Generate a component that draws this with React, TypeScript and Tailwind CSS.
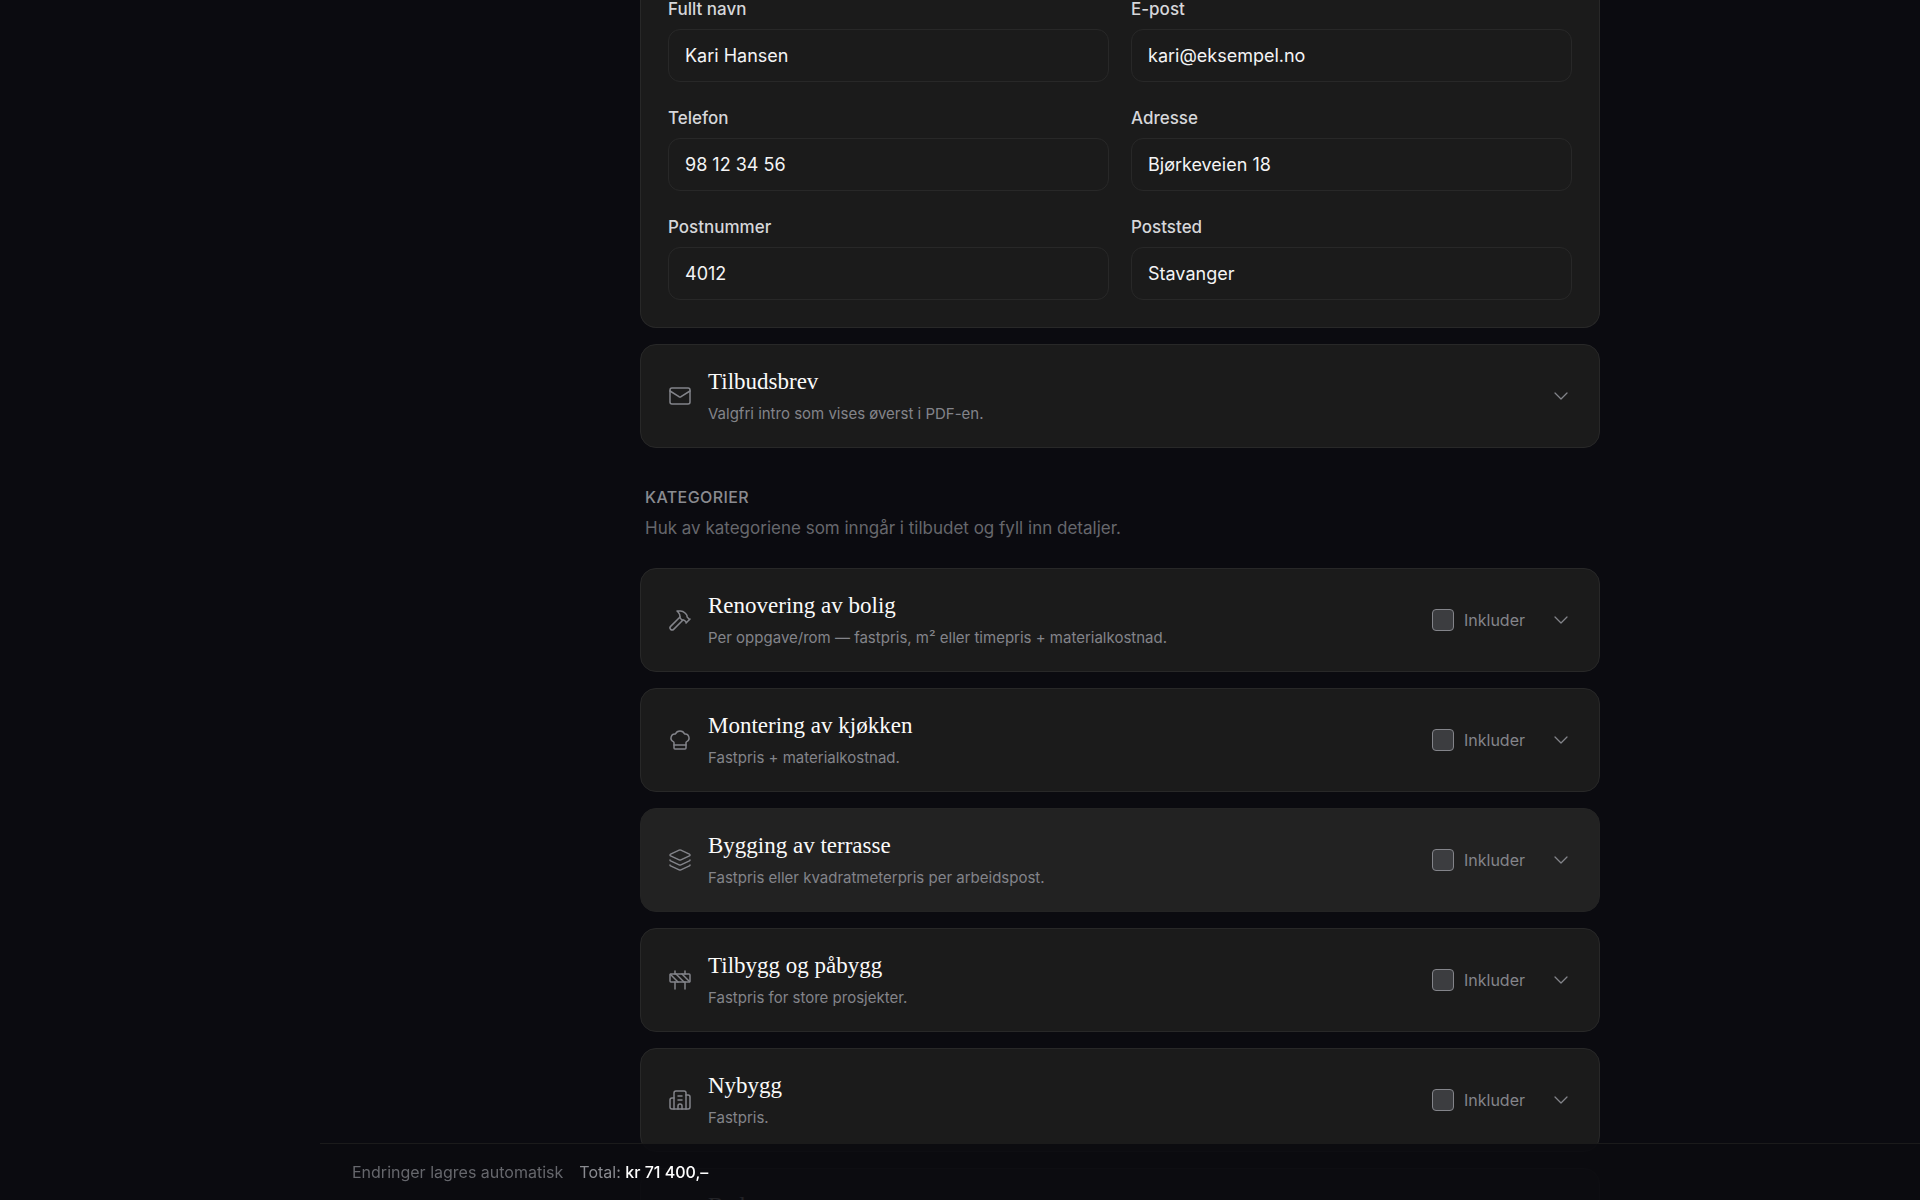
import { Mail, Hammer, ChefHat, Layers, Construction, Building2, ChevronDown, Wrench, type LucideIcon } from "lucide-react";
import { useState } from "react";

const fields = [
  { id: "name", label: "Fullt navn", value: "Kari Hansen", type: "text" },
  { id: "email", label: "E-post", value: "kari@eksempel.no", type: "email" },
  { id: "phone", label: "Telefon", value: "98 12 34 56", type: "tel" },
  { id: "address", label: "Adresse", value: "Bjørkeveien 18", type: "text" },
  { id: "zip", label: "Postnummer", value: "4012", type: "text" },
  { id: "city", label: "Poststed", value: "Stavanger", type: "text" },
];

type Category = { id: string; title: string; text: string; icon: LucideIcon; active?: boolean };

const categories: Category[] = [
  { id: "renovering", title: "Renovering av bolig", text: "Per oppgave/rom — fastpris, m² eller timepris + materialkostnad.", icon: Hammer },
  { id: "kjokken", title: "Montering av kjøkken", text: "Fastpris + materialkostnad.", icon: ChefHat },
  { id: "terrasse", title: "Bygging av terrasse", text: "Fastpris eller kvadratmeterpris per arbeidspost.", icon: Layers, active: true },
  { id: "tilbygg", title: "Tilbygg og påbygg", text: "Fastpris for store prosjekter.", icon: Construction },
  { id: "nybygg", title: "Nybygg", text: "Fastpris.", icon: Building2 },
];

function Field({ id, label, value, type }: (typeof fields)[number]) {
  const [text, setText] = useState(value);
  return (
    <div className="flex flex-col gap-2">
      <label htmlFor={id} className="text-[17px] leading-6 font-medium text-[#d6d7da]">{label}</label>
      <input
        id={id}
        type={type}
        value={text}
        onChange={(e) => setText(e.target.value)}
        className="h-[53px] w-full rounded-xl border border-[#282828] bg-transparent px-4 text-lg text-[#f4f4f5] outline-none"
      />
    </div>
  );
}

function Card({ id, title, text, icon: Icon, active, selectable }: Category & { selectable?: boolean }) {
  return (
    <section
      className={
        active
          ? "flex h-26 items-center rounded-2xl border border-[#242424] bg-[#222222] pr-[26px] pl-[27px]"
          : "flex h-26 items-center rounded-2xl border border-[#282828] bg-[#1b1b1b] pr-[26px] pl-[27px]"
      }
    >
      <Icon size={24} strokeWidth={1.5} className="shrink-0 text-[#83848a]" aria-hidden />
      <div className="ml-4 flex min-w-0 flex-1 flex-col gap-1.5 pt-0.5">
        <h3 className="font-['Liberation_Serif',serif] text-[23px] leading-7 text-[#fafafa]">{title}</h3>
        <p className="text-[15px] leading-6 text-[#83848a]">{text}</p>
      </div>
      {selectable && (
        <label htmlFor={id} className="mr-6 flex items-center gap-2.5 text-base text-[#83848a]">
          <input id={id} type="checkbox" className="size-[22px] appearance-none rounded border border-[#83848a] bg-[#3c3d40]" />
          Inkluder
        </label>
      )}
      <button type="button" aria-label={"Vis " + title} className="flex size-6 items-center justify-center text-[#83848a]">
        <ChevronDown size={24} strokeWidth={1.25} />
      </button>
    </section>
  );
}

export default function App() {
  return (
    <div className="h-screen overflow-hidden bg-[#0b0b10] pl-80 font-['Inter',sans-serif] text-white">
      <main className="mx-auto flex w-full max-w-[960px] flex-col gap-4">
        <section className="rounded-b-2xl border border-t-0 border-[#282828] bg-[#1b1b1b] px-[27px] pb-[27px]">
          <div className="-mt-[3px] grid grid-cols-2 gap-x-[22px] gap-y-6">
            {fields.map((f) => <Field key={f.id} {...f} />)}
          </div>
        </section>
        <Card id="brev" title="Tilbudsbrev" text="Valgfri intro som vises øverst i PDF-en." icon={Mail} />
        <header className="mt-[21px] mb-2.5 flex flex-col gap-[5px] px-[5px]">
          <h2 className="text-base leading-6 font-medium tracking-wide text-[#8a8b90]">KATEGORIER</h2>
          <p className="text-[17px] leading-7 text-[#66676c]">Huk av kategoriene som inngår i tilbudet og fyll inn detaljer.</p>
        </header>
        {categories.map((c) => <Card key={c.id} {...c} selectable />)}
        <Card id="bad" title="Bad" text="Fastpris." icon={Wrench} selectable />
      </main>
      <footer className="fixed right-0 bottom-0 left-80 flex h-[57px] items-center gap-4 border-t border-[#1b1b1b] bg-[#0b0b10]/90 px-8 text-base">
        <span className="text-[#66676c]">Endringer lagres automatisk</span>
        <span className="text-[#8a8b90]">Total: <strong className="font-medium text-white">kr 71 400,–</strong></span>
      </footer>
    </div>
  );
}
